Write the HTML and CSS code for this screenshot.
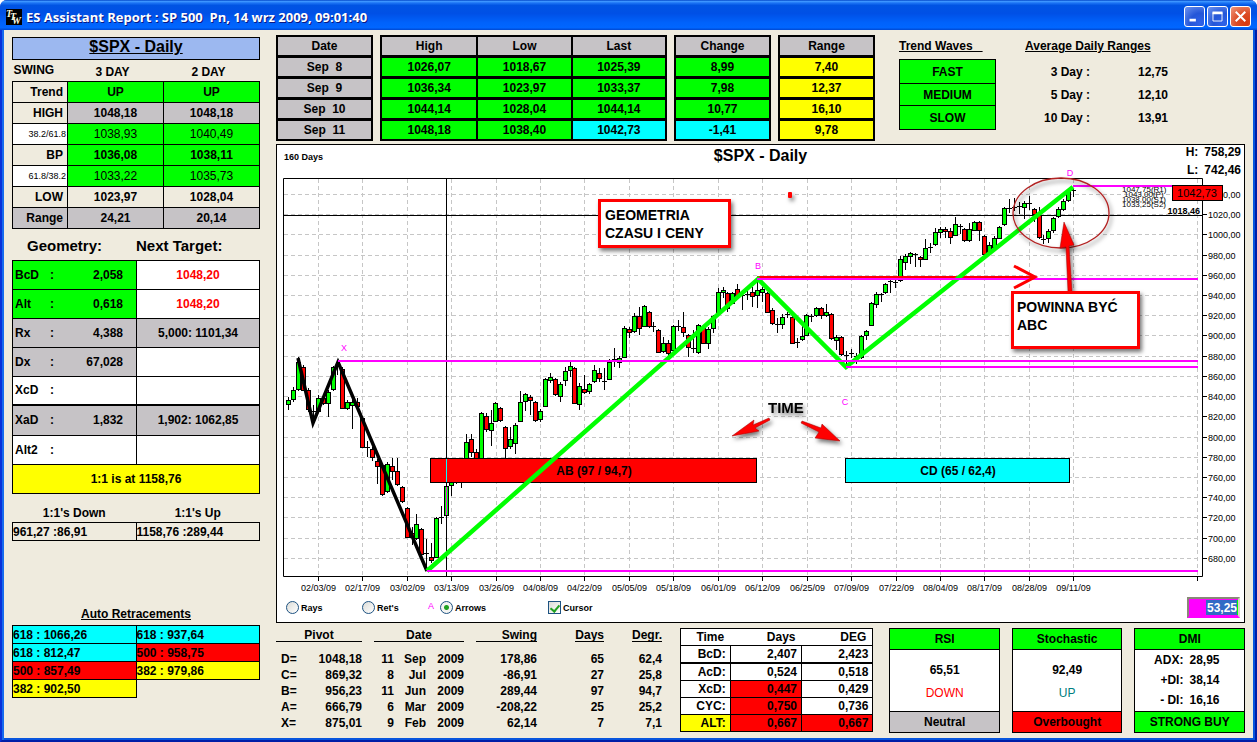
FILE: index.html
```html
<!DOCTYPE html>
<html lang="en">
<head>
<meta charset="utf-8">
<title>ES Assistant Report : SP 500</title>
<link rel="stylesheet" href="styles.css">
</head>
<body>
<div class="window">
  <header class="titlebar">
    <svg class="app-icon" viewBox="0 0 16 16" aria-hidden="true">
      <rect width="16" height="16" fill="#000"/>
      <g fill="#fffde0" font-family="Liberation Serif, serif" font-style="italic" font-weight="bold" font-size="10">
        <text x="0" y="8">T</text><text x="4" y="11">T</text><text x="6" y="15">W</text>
      </g>
    </svg>
    <h1 class="window-title">ES Assistant Report : SP 500&nbsp; Pn, 14 wrz 2009, 09:01:40</h1>
    <div class="window-buttons">
      <button class="wbtn" type="button" aria-label="Minimize"><svg viewBox="0 0 21 21"><rect x="5" y="13" width="7" height="3" fill="#fff"/></svg></button>
      <button class="wbtn" type="button" aria-label="Maximize"><svg viewBox="0 0 21 21"><path d="M5.500 6v9.500h10V6" fill="none" stroke="#fff"/><rect x="5" y="5" width="11" height="3" fill="#fff"/></svg></button>
      <button class="wbtn wbtn-close" type="button" aria-label="Close"><svg viewBox="0 0 21 21"><path d="M6 6l9 9M15 6l-9 9" stroke="#fff" stroke-width="2.200" stroke-linecap="square"/></svg></button>
    </div>
  </header>

  <main class="content">
    <aside class="side">
      <h2 class="symbol">$SPX - Daily</h2>
      <table class="swing">
        <thead><tr><th class="swing-name">SWING</th><th>3 DAY</th><th>2 DAY</th></tr></thead>
        <tbody>
          <tr class="green"><th>Trend</th><td>UP</td><td>UP</td></tr>
          <tr class="grey"><th>HIGH</th><td>1048,18</td><td>1048,18</td></tr>
          <tr class="green light"><th>38.2/61.8</th><td>1038,93</td><td>1040,49</td></tr>
          <tr class="green"><th>BP</th><td>1036,08</td><td>1038,11</td></tr>
          <tr class="green light"><th>61.8/38.2</th><td>1033,22</td><td>1035,73</td></tr>
          <tr><th>LOW</th><td>1023,97</td><td>1028,04</td></tr>
          <tr class="grey all"><th>Range</th><td>24,21</td><td>20,14</td></tr>
        </tbody>
      </table>

      <div class="geo-heads"><h3>Geometry:</h3><h3>Next Target:</h3></div>
      <table class="geo">
        <tbody>
          <tr><th class="green">BcD</th><td class="colon green">:</td><td class="num green">2,058</td><td class="target hot">1048,20</td></tr>
          <tr><th class="green">Alt</th><td class="colon green">:</td><td class="num green">0,618</td><td class="target hot">1048,20</td></tr>
          <tr class="grey"><th>Rx</th><td class="colon">:</td><td class="num">4,388</td><td class="target">5,000: 1101,34</td></tr>
          <tr><th class="grey">Dx</th><td class="colon grey">:</td><td class="num grey">67,028</td><td class="target"></td></tr>
          <tr><th>XcD</th><td class="colon">:</td><td class="num"></td><td class="target"></td></tr>
          <tr class="grey strong"><th>XaD</th><td class="colon">:</td><td class="num">1,832</td><td class="target">1,902: 1062,85</td></tr>
          <tr><th>Alt2</th><td class="colon">:</td><td class="num"></td><td class="target"></td></tr>
          <tr><td class="one yellow" colspan="4">1:1 is at 1158,76</td></tr>
        </tbody>
      </table>

      <table class="pairs ones">
        <thead><tr><th>1:1's Down</th><th>1:1's Up</th></tr></thead>
        <tbody><tr><td>961,27 :86,91</td><td>1158,76 :289,44</td></tr></tbody>
      </table>

      <h3 class="auto-title">Auto Retracements</h3>
      <table class="pairs">
        <tbody>
          <tr><td class="cyan">618 : 1066,26</td><td class="cyan">618 : 937,64</td></tr>
          <tr><td class="cyan">618 : 812,47</td><td class="red">500 : 958,75</td></tr>
          <tr><td class="red">500 : 857,49</td><td class="yellow">382 : 979,86</td></tr>
          <tr><td class="yellow">382 : 902,50</td></tr>
        </tbody>
      </table>
    </aside>

    <div class="primary">
      <section class="top">
        <div class="quotes">
          <table class="quote">
            <tr><th>Date</th></tr><tr class="grey"><td>Sep&nbsp; 8</td></tr><tr class="grey"><td>Sep&nbsp; 9</td></tr><tr class="grey"><td>Sep&nbsp; 10</td></tr><tr class="grey"><td>Sep&nbsp; 11</td></tr>
          </table>
          <table class="quote">
            <tr><th>High</th><th>Low</th><th>Last</th></tr>
            <tr class="green"><td>1026,07</td><td>1018,67</td><td>1025,39</td></tr>
            <tr class="green"><td>1036,34</td><td>1023,97</td><td>1033,37</td></tr>
            <tr class="green"><td>1044,14</td><td>1028,04</td><td>1044,14</td></tr>
            <tr class="green"><td>1048,18</td><td>1038,40</td><td class="cyan">1042,73</td></tr>
          </table>
          <table class="quote">
            <tr><th>Change</th></tr><tr class="green"><td>8,99</td></tr><tr class="green"><td>7,98</td></tr><tr class="green"><td>10,77</td></tr><tr><td class="cyan">-1,41</td></tr>
          </table>
          <table class="quote">
            <tr><th>Range</th></tr><tr class="yellow"><td>7,40</td></tr><tr class="yellow"><td>12,37</td></tr><tr class="yellow"><td>16,10</td></tr><tr class="yellow"><td>9,78</td></tr>
          </table>
        </div>
        <div class="waves">
          <h3 class="ruled">Trend Waves&nbsp;&nbsp;&nbsp;</h3>
          <ul class="wave-list"><li>FAST</li><li class="mid">MEDIUM</li><li>SLOW</li></ul>
        </div>
        <div class="ranges">
          <h3 class="ruled">Average Daily Ranges</h3>
          <dl class="range-list"><dt>3 Day :</dt><dd>12,75</dd><dt>5 Day :</dt><dd>12,10</dd><dt>10 Day :</dt><dd>13,91</dd></dl>
        </div>
      </section>

      <section class="panel">
        <header class="panel-head">
          <span class="days">160 Days</span>
          <h2 class="panel-title">$SPX - Daily</h2>
          <dl class="hl"><dt>H:</dt><dd>758,29</dd><dt>L:</dt><dd>742,46</dd></dl>
        </header>
        <svg class="chart" viewBox="277 178 967 418" role="img" aria-label="$SPX daily candlestick chart">
          <defs>
            <filter id="shadow" x="-20%" y="-20%" width="150%" height="150%"><feDropShadow dx="2" dy="3" stdDeviation="2" flood-color="#000" flood-opacity="0.550"/></filter>
          </defs>
          <g id="grid"></g>
          <g class="frame"><path d="M283.500 178.500H1202.500V576.500H283.500Z"/></g>
          <path class="cursor-line" d="M284 215.500H1202M446.500 179V576"/>
          <g id="candles"></g>
          <path d="M446.500 487V515" stroke="#f0f"/>
          <g stroke="#000">
            <rect x="430.500" y="458.500" width="326" height="24" fill="#f00"/>
            <rect x="845.500" y="458.500" width="224" height="24" fill="#0ff"/>
          </g>
          <path d="M446.500 459V482" stroke="#0ff"/>
          <text class="bar-text" x="594" y="475">AB (97 / 94,7)</text>
          <text class="bar-text" x="958" y="475">CD (65 / 62,4)</text>
          <path d="M298 358L313 423L338 362L427 571" fill="none" stroke="#000" stroke-width="3.500"/>
          <path d="M757 277H1034" stroke="#f00" stroke-width="2"/>
          <path d="M427 571L758 279L846 367L1073 187" fill="none" stroke="#0f0" stroke-width="4.500"/>
          <path d="M338 361H1198M757 279H1198M846 367H1198M427 571H1198M1073 186H1198" stroke="#f0f" stroke-width="2"/>
          <path d="M1014 266L1035 277L1014 288" fill="none" stroke="#f00" stroke-width="3"/>
          <g class="pivot-text">
            <text x="344" y="351">X</text><text x="758" y="269">B</text><text x="845" y="405">C</text><text x="1070" y="176">D</text><text x="431" y="609">A</text>
          </g>
          <g class="level-text">
            <text x="1122" y="192">1047,75(R1)</text><text x="1124" y="197">1043,00(P)</text><text x="1122" y="202">1038,00(S1)</text><text x="1122" y="207">1033,25(S2)</text>
          </g>
          <text class="cursor-text" x="1200" y="214">1018,46</text>
          <rect x="1172.500" y="185.500" width="50" height="15" fill="#f00" stroke="#000"/>
          <text class="last-text" x="1197" y="197">1042,73</text>
          <ellipse cx="1061" cy="213" rx="48" ry="35" fill="none" stroke="#b22222" stroke-width="1.300" filter="url(#shadow)"/>
          <g filter="url(#shadow)" fill="#f00">
            <path d="M1064 222L1074 245L1069 246L1072 292H1068L1066 247L1060 248Z" stroke="#900" stroke-width="0.500"/>
            <path d="M732 436L754 420L753 425L769 418L770 420L755 428L759 431Z" stroke="#900" stroke-width="0.500"/>
            <path d="M840 441L822 424L821 428L802 421L801 423L819 432L815 438Z" stroke="#900" stroke-width="0.500"/>
            <rect x="788" y="192" width="4" height="6" rx="1"/>
          </g>
          <g filter="url(#shadow)" fill="#fff" stroke="#f00" stroke-width="3">
            <rect x="599.500" y="200.500" width="130" height="46"/>
            <rect x="1012.500" y="292.500" width="126" height="55"/>
          </g>
          <g class="note">
            <text x="605" y="220">GEOMETRIA</text><text x="605" y="238">CZASU I CENY</text>
            <text x="1017" y="312">POWINNA BYĆ</text><text x="1017" y="330">ABC</text>
          </g>
          <text class="time-note" x="768" y="413" filter="url(#shadow)">TIME</text>
        </svg>
        <form class="controls">
          <label class="opt"><input type="radio" name="mode">Rays</label>
          <label class="opt opt-wide"><input type="radio" name="mode">Ret's</label>
          <label class="opt opt-arrows"><input type="radio" name="mode" checked>Arrows</label>
          <label class="opt"><input type="checkbox" checked>Cursor</label>
          <input class="amount" type="text" value="53,25" aria-label="Value">
        </form>
      </section>

      <section class="bottom">
        <table class="pivots">
          <colgroup><col class="c-key"><col class="c-pivot"><col class="c-day"><col class="c-month"><col class="c-year"><col class="c-swing"><col class="c-days"><col class="c-degr"></colgroup>
          <thead><tr><th colspan="2"><span>Pivot</span></th><th class="gap" colspan="3"><span>Date</span></th><th class="gap right"><span>Swing</span></th><th class="right"><span class="fit">Days</span></th><th class="right"><span class="fit">Degr.</span></th></tr></thead>
          <tbody>
            <tr><th>D=</th><td>1048,18</td><td>11</td><td>Sep</td><td>2009</td><td>178,86</td><td>65</td><td>62,4</td></tr>
            <tr><th>C=</th><td>869,32</td><td>8</td><td>Jul</td><td>2009</td><td>-86,91</td><td>27</td><td>25,8</td></tr>
            <tr><th>B=</th><td>956,23</td><td>11</td><td>Jun</td><td>2009</td><td>289,44</td><td>97</td><td>94,7</td></tr>
            <tr><th>A=</th><td>666,79</td><td>6</td><td>Mar</td><td>2009</td><td>-208,22</td><td>25</td><td>25,2</td></tr>
            <tr><th>X=</th><td>875,01</td><td>9</td><td>Feb</td><td>2009</td><td>62,14</td><td>7</td><td>7,1</td></tr>
          </tbody>
        </table>
        <table class="time">
          <colgroup><col class="t-key"><col class="t-val"><col class="t-val"></colgroup>
          <thead><tr><th>Time</th><th>Days</th><th>DEG</th></tr></thead>
          <tbody>
            <tr><th>BcD:</th><td>2,407</td><td>2,423</td></tr>
            <tr class="strong"><th>AcD:</th><td>0,524</td><td>0,518</td></tr>
            <tr><th>XcD:</th><td class="red">0,447</td><td>0,429</td></tr>
            <tr><th>CYC:</th><td class="red">0,750</td><td>0,736</td></tr>
            <tr><th class="yellow">ALT:</th><td class="red">0,667</td><td class="red">0,667</td></tr>
          </tbody>
        </table>
        <div class="cards">
          <article class="card"><h3 class="green">RSI</h3><div class="card-body"><p>65,51</p><p class="down">DOWN</p></div><footer class="grey">Neutral</footer></article>
          <article class="card"><h3 class="green">Stochastic</h3><div class="card-body"><p>92,49</p><p class="up">UP</p></div><footer class="red">Overbought</footer></article>
          <article class="card"><h3 class="green">DMI</h3><dl class="dmi"><dt>ADX:</dt><dd>28,95</dd><dt>+DI:</dt><dd>38,14</dd><dt>- DI:</dt><dd>16,16</dd></dl><footer class="green">STRONG BUY</footer></article>
        </div>
      </section>
    </div>
  </main>
</div>
<script src="chart.js"></script>
</body>
</html>
```

FILE: styles.css
```css
* { box-sizing: border-box; }
body { margin: 0; background: #fff; color: #000; font: bold 12px/14px "Liberation Sans", Arial, sans-serif; }
h1, h2, h3, p, ul, dl, dd { margin: 0; padding: 0; font-size: inherit; font-weight: inherit; }
table { border-collapse: collapse; width: 100%; table-layout: fixed; }
th, td { padding: 0; font-weight: bold; line-height: 14px; text-align: center; }

.green { background: #0f0; }
.grey { background: #c6c3c6; }
.yellow { background: #ff0; }
.cyan { background: #0ff; }
.red { background: #f00; }

.window { min-width: 1000px; min-height: 100vh; background: #efebde; border: solid; border-width: 0 2px 2px; border-color: #001ea8 #001ea8 #001ea8 #0831d9; border-radius: 7px 7px 0 0; box-shadow: inset 2px 0 #166aee, inset -2px -2px #0855dd; }
.titlebar { display: flex; align-items: center; gap: 4px; height: 30px; margin: 0 -2px; padding: 3px 6px 0; border-radius: 7px 7px 0 0; background: linear-gradient(#0348c8 0, #3c95ff 5%, #1c74f4 10%, #0054e3 18%, #0050e6 45%, #0062fb 75%, #0066ff 92%, #0048d0 100%); }
.app-icon { width: 16px; height: 16px; flex: none; }
.window-title { flex: 1; color: #fff; font: 700 13px/18px "Open Sans", "Noto Sans", sans-serif; text-shadow: 1px 1px #0a1883; white-space: nowrap; }
.window-buttons { display: flex; gap: 2px; }
.wbtn { width: 21px; height: 21px; padding: 0; border: 1px solid #fff; border-radius: 3px; background: radial-gradient(circle at 80% 85%, #2f62e8, #2456d8 45%, #6f95f0); }
.wbtn svg { display: block; width: 19px; height: 19px; }
.wbtn-close { background: radial-gradient(circle at 80% 85%, #d83a10, #dc4c26 45%, #f0987c); }

.content { display: flex; gap: 16px; padding: 5px 10px 6px; }
.side { flex: 0 0 248px; padding-top: 2px; }
.primary { flex: 1; min-width: 0; }

.symbol { height: 23px; border: 1px solid #000; background: #9cb8f0; font-size: 16px; line-height: 18px; text-align: center; text-decoration: underline; }
.swing th:first-child { width: 55px; padding-right: 4px; text-align: right; }
.swing thead th { height: 21px; padding: 3px 6px 0 0; }
.swing thead .swing-name { padding: 0 0 0 1px; text-align: left; }
.swing tbody th, .swing tbody td { height: 21px; border: 1px solid #000; }
.swing tbody .light td { font-weight: normal; }
.swing tbody .light th { padding-right: 1px; background: #fff; font-size: 9px; font-weight: normal; }
.swing tbody tr:not(.all):not(.light) th { background: #efebde; }

.geo-heads { display: grid; grid-template-columns: 1fr 1fr; padding: 8px 0 6px; font-size: 15px; line-height: 17px; }
.geo-heads h3 { padding-left: 15px; }
.geo-heads h3 + h3 { padding-left: 0; }
.geo tr { background: #fff; border: 1px solid #000; }
.geo tr.grey { background: #c6c3c6; }
.geo .green { background: #0f0; }
.geo .grey { background: #c6c3c6; }
.geo tr.strong { border-top: 2px solid #000; }
.geo th, .geo td { height: 29px; }
.geo tr.strong th, .geo tr.strong td { height: 30px; }
.geo th { width: 36px; padding-left: 2px; text-align: left; }
.geo .colon { width: 7px; }
.geo .num { width: 81px; padding-right: 13px; text-align: right; }
.geo .target { border-left: 1px solid #000; }
.geo .hot { color: #f00; }
.geo td.yellow { background: #ff0; }

.pairs td { height: 18px; border: 1px solid #000; text-align: left; }
.ones { margin-top: 11px; }
.ones th { height: 18px; }
.auto-title { margin: 66px 0 4px; text-align: center; text-decoration: underline; }

.top { display: grid; grid-template-columns: 599fr 97fr 225fr; gap: 24px; }
.quotes { display: grid; grid-template-columns: 97fr 287fr 97fr 97fr; gap: 7px; }
.quote { border-collapse: separate; border-spacing: 0; border: 2px solid #000; background: #000; }
.quote th { height: 18px; background: #c6c3c6; }
.quote td { height: 21px; border-top: 3px solid #000; }
.quote th + th, .quote td + td { border-left: 2px solid #000; }
.ruled { padding-top: 4px; text-decoration: underline; white-space: nowrap; }
.wave-list { margin-top: 6px; border: 1px solid #000; background: #0f0; list-style: none; text-align: center; }
.wave-list li { padding: 5px 0 4px; }
.wave-list .mid { padding: 4px 0 3px; }
.wave-list li + li { border-top: 1px solid #000; }
.ranges { padding-left: 5px; }
.range-list { display: grid; grid-template-columns: 65px auto; gap: 9px 48px; padding-top: 12px; }
.range-list dt { text-align: right; }

.panel { margin: 3px 0 5px; border: 1px solid #000; background: #fff; }
.panel-head { display: grid; grid-template-columns: 1fr auto 1fr; height: 33px; }
.days { padding: 5px 7px; font-size: 9px; }
.panel-title { padding-top: 2px; font-size: 16px; line-height: 18px; }
.hl { display: grid; grid-template-columns: auto auto; justify-content: end; gap: 3px 6px; padding-right: 3px; }
.hl dt { text-align: right; }
.chart { display: block; width: 100%; height: auto; overflow: visible; }
.grid-line { stroke: #c6c6c6; stroke-dasharray: 4 3; }
.frame path { fill: none; stroke: #000; }
.tick { stroke: #000; }
.axis-text { font-size: 9px; font-weight: normal; }
.axis-date { text-anchor: middle; }
.cursor-line { stroke: #000; }
.bar-text { font-size: 12px; text-anchor: middle; }
.pivot-text { fill: #f0f; font-size: 9px; font-weight: normal; text-anchor: middle; }
.level-text { font-size: 8px; font-weight: normal; }
.cursor-text { font-size: 9px; text-anchor: end; }
.last-text { font-size: 11px; font-weight: normal; text-anchor: middle; }
.note { font-size: 14px; }
.time-note { font-size: 15px; }

.controls { display: flex; align-items: center; height: 26px; padding: 0 4px 3px 9px; font-size: 9px; }
.opt { display: flex; align-items: center; gap: 2px; width: 76px; }
.opt-wide { width: 78px; }
.opt-arrows { width: 108px; }
.opt input { appearance: none; position: relative; width: 13px; height: 13px; margin: 0; border: 1px solid #1d5281; background: linear-gradient(135deg, #dcdcd7, #fff); }
.opt input[type="radio"] { border-radius: 50%; }
.opt input[type="radio"]:checked { background: radial-gradient(circle, #21a121 0 2px, #f4f4f2 3px); }
.opt input[type="checkbox"]:checked::after { content: ""; position: absolute; left: 3px; top: 1px; width: 4px; height: 7px; border: solid #21a121; border-width: 0 2px 2px 0; transform: rotate(40deg); }
.amount { width: 53px; height: 21px; margin-left: auto; padding: 0 1px; border: 2px solid #8a8778; border-right-color: #d8d4c4; border-bottom-color: #f0f; background: linear-gradient(#0f0, #0f0) right 0 center / 1px 15px no-repeat, linear-gradient(#316ac5, #316ac5) right 1px center / 31px 15px no-repeat, #f0f; color: #fff; font: bold 12px/14px "Liberation Sans", Arial, sans-serif; text-align: right; }

.bottom { display: grid; grid-template-columns: 388fr 194fr 356fr; gap: 16px; align-items: start; }
.pivots { width: 99%; }
.pivots td { text-align: right; }
.pivots tbody th { padding-left: 5px; text-align: left; }
.pivots tbody th, .pivots tbody td { height: 16px; }
.pivots thead th { height: 23px; vertical-align: top; }
.pivots thead span { display: block; height: 14px; border-bottom: 1px solid #000; line-height: 15px; }
.pivots thead .gap { padding-left: 12px; }
.pivots thead .right { text-align: right; }
.pivots thead .fit { display: inline-block; }
.c-key { width: 30px; }
.c-pivot { width: 56px; }
.c-day, .c-month { width: 32px; }
.c-year { width: 38px; }
.c-swing { width: 73px; }
.c-days { width: 67px; }
.c-degr { width: 58px; }

.time { border: 1px solid #000; background: #fff; }
.time tbody tr { border-top: 1px solid #000; }
.time tbody tr.strong { border-top-width: 2px; }
.time th, .time td { height: 17px; text-align: right; }
.time tbody tr.strong th, .time tbody tr.strong td { height: 18px; }
.time th { padding-right: 4px; }
.time thead th { padding-right: 6px; }
.time td { padding-right: 4px; border-left: 1px solid #000; }
.t-key { width: 26%; }
.t-val { width: 37%; }

.cards { display: grid; grid-template-columns: 1fr 1fr 1fr; gap: 12px; }
.card { border: 1px solid #000; background: #fff; text-align: center; }
.card h3 { padding: 3px 0; border-bottom: 1px solid #000; }
.card footer { padding: 3px 0; border-top: 1px solid #000; }
.card-body { height: 61px; padding-top: 13px; }
.card-body p + p { padding-top: 9px; font-weight: normal; }
.down { color: #f00; }
.up { color: #008080; }
.dmi { display: grid; grid-template-columns: 48px auto; align-content: start; gap: 6px; height: 61px; padding-top: 3px; text-align: left; }
.dmi dt { text-align: right; }
```

FILE: chart.js
```javascript
const NS = "http://www.w3.org/2000/svg";

function add(parent, name, attrs, text) {
  const el = document.createElementNS(NS, name);
  for (const key in attrs) el.setAttribute(key, attrs[key]);
  if (text) el.textContent = text;
  parent.appendChild(el);
}

const grid = document.getElementById("grid");
for (let price = 1040; price >= 680; price -= 20) {
  const y = Math.round(194 + (1040 - price) * 1.0105) + 0.5;
  add(grid, "path", { class: "grid-line", d: `M284 ${y}H1198` });
  add(grid, "path", { class: "tick", d: `M1202 ${y}H1207` });
  add(grid, "text", { class: "axis-text", x: 1208, y: y + 3 }, price + ",00");
}
const dates = ["02/03/09", "02/17/09", "03/02/09", "03/13/09", "03/26/09", "04/08/09", "04/22/09", "05/05/09", "05/18/09",
  "06/01/09", "06/12/09", "06/25/09", "07/09/09", "07/22/09", "08/04/09", "08/17/09", "08/28/09", "09/11/09"];
const columns = dates.map((label, k) => [Math.floor(318.3 + k * 44.44) + 0.5, label]);
columns.push([1197.5, ""]);
for (const [x, label] of columns) {
  add(grid, "path", { class: "grid-line", d: `M${x} 179V576` });
  add(grid, "path", { class: "tick", d: `M${x} 576V581` });
  if (label) add(grid, "text", { class: "axis-text axis-date", x, y: 591 }, label);
}

// One bar per entry: wick top, body top, body bottom, wick bottom (g = up, r = down, k = doji).
const bars = `397 400 404 410 g|387 390 399 402 g|357 362 389 391 g|365 367 390 391 r|388 390 409 412 r|405 411 411 424 k|395 398 411 412 g|396 398 403 405 r|390 392 403 417 g|366 367 389 391 g
362 366 366 375 k|367 369 408 409 r|400 402 408 410 g|397 402 405 429 g|398 402 406 408 r|416 418 447 448 r|441 447 447 457 k|447 449 457 461 r|459 461 466 484 r|464 465 494 496 r
462 464 491 493 g|458 466 471 480 r|458 471 484 486 r|486 487 501 503 r|507 508 537 538 r|527 533 537 545 r|514 524 538 540 g|528 529 554 555 r|539 553 553 570 k|543 557 560 563 r
517 518 557 558 g|506 517 517 524 k|484 486 515 516 g|480 482 485 496 g|470 482 482 484 k|465 480 480 488 k|434 442 460 462 g|434 439 452 457 r|449 452 470 471 r|412 413 465 466 g
413 416 429 432 r|410 423 430 446 g|402 403 421 422 g|407 408 420 422 r|426 427 448 460 r|427 439 446 449 g|423 425 443 454 g|391 402 421 422 g|393 394 401 411 g|395 397 400 415 r
401 402 420 422 r|409 411 419 422 g|378 379 406 407 g|373 377 380 383 g|378 379 394 396 r|382 384 396 402 g|367 371 380 386 g|362 366 370 377 g|367 368 403 404 r|383 386 404 410 g
375 389 392 394 r|383 384 391 394 g|365 370 381 383 g|368 373 378 382 r|368 381 381 390 k|359 362 379 380 g|348 359 361 367 g|356 358 362 368 g|326 328 357 358 g|327 329 332 338 r
313 316 331 333 g|307 316 328 335 r|305 306 326 327 g|311 312 326 328 r|322 326 326 332 k|329 330 352 353 r|337 343 351 353 g|340 343 353 356 r|325 326 350 351 g|320 326 326 331 k
312 327 332 337 r|334 335 347 357 r|330 348 348 353 k|324 325 352 354 g|326 328 343 344 r|327 329 343 349 g|315 316 328 333 g|288 292 312 313 g|287 290 292 298 g|292 293 308 312 r
292 293 303 304 g|284 289 297 298 r|292 295 295 310 k|289 294 294 300 k|287 292 296 307 r|279 290 295 308 g|287 289 292 302 g|292 293 312 313 r|308 310 323 325 r|318 324 324 333 k
314 317 324 329 g|312 314 314 318 k|316 317 343 344 r|338 342 342 348 k|325 336 339 341 g|314 315 335 336 g|314 316 316 322 k|307 308 315 317 g|307 308 315 319 r|304 312 315 317 g
313 314 338 340 r|335 337 340 350 g|336 337 354 356 r|351 355 355 367 k|349 353 353 358 k|353 356 356 364 k|335 336 357 359 g|330 331 335 340 g|302 303 325 326 g|292 294 304 308 g
293 294 294 302 k|283 284 292 294 g|279 281 281 293 k|278 282 282 288 k|256 259 280 282 g|254 256 262 270 g|252 253 256 264 g|253 254 254 267 k|256 257 259 267 r|239 248 259 260 g
243 247 247 253 k|228 232 244 246 g|227 229 232 238 g|227 229 231 238 r|228 231 237 244 r|217 224 235 236 g|224 226 226 234 k|228 229 240 242 r|223 229 240 242 g|221 222 230 231 g
221 222 230 241 r|235 236 254 255 r|242 245 252 254 g|236 238 247 248 g|226 227 238 239 g|207 208 224 226 g|199 208 208 213 k|198 207 207 211 k|202 206 206 214 k|201 203 207 219 g
196 203 203 210 k|208 209 214 222 r|207 215 237 239 r|235 239 239 244 k|229 231 238 243 g|217 218 230 233 g|207 209 216 218 g|199 201 209 211 g|188 190 200 202 g|188 190 190 197 k`;
const candles = document.getElementById("candles");
const fills = { g: "#0f0", r: "#f00" };
bars.split(/[|\n]/).forEach((entry, i) => {
  const [high, top, bottom, low, kind] = entry.trim().split(" ");
  const x = Math.floor(288.6 + i * 4.937) + 0.5;
  add(candles, "path", { d: `M${x} ${high}V${low}`, stroke: "#000" });
  if (kind === "k") add(candles, "path", { d: `M${x - 2.5} ${+top + 0.5}h5`, stroke: "#000" });
  else add(candles, "rect", { x: x - 2, y: +top + 0.5, width: 4, height: bottom - top, fill: fills[kind], stroke: "#000" });
});
```
